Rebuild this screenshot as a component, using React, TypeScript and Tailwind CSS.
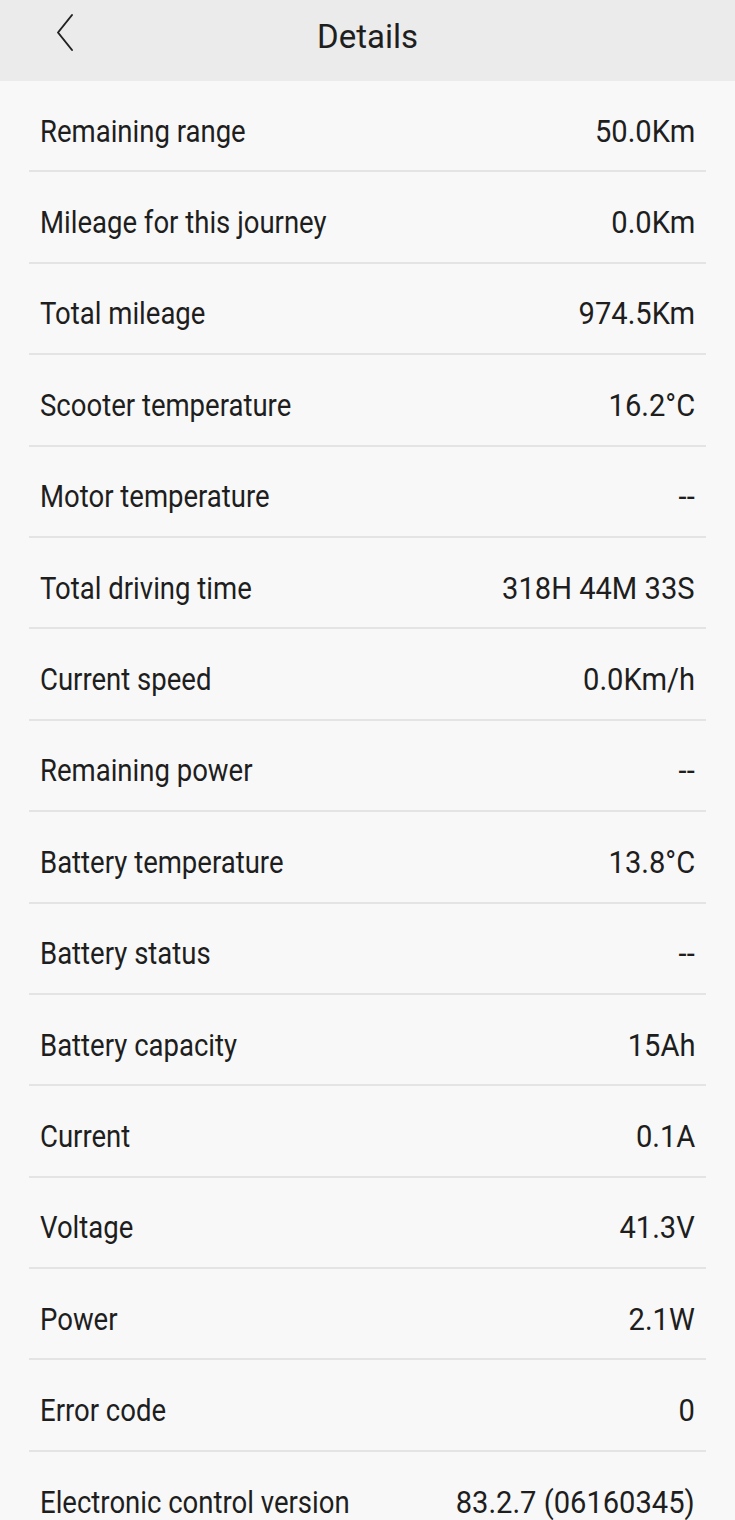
const rows: [string, string][] = [
  ['Remaining range', '50.0Km'],
  ['Mileage for this journey', '0.0Km'],
  ['Total mileage', '974.5Km'],
  ['Scooter temperature', '16.2°C'],
  ['Motor temperature', '--'],
  ['Total driving time', '318H 44M 33S'],
  ['Current speed', '0.0Km/h'],
  ['Remaining power', '--'],
  ['Battery temperature', '13.8°C'],
  ['Battery status', '--'],
  ['Battery capacity', '15Ah'],
  ['Current', '0.1A'],
  ['Voltage', '41.3V'],
  ['Power', '2.1W'],
  ['Error code', '0'],
  ['Electronic control version', '83.2.7 (06160345)'],
]

function BackIcon() {
  return (
    <svg width="20" height="40" viewBox="0 0 20 40" fill="none">
      <path d="M16 2 L2 19.5 L16 37" stroke="#222" strokeWidth="2" strokeLinecap="round" strokeLinejoin="round" />
    </svg>
  )
}

export default function App() {
  return (
    <div className="min-h-screen w-full bg-[#f8f8f8] text-[#1e1e1e] font-['Roboto',_'Liberation_Sans',_sans-serif] overflow-hidden">
      <header className="h-[81px] bg-[#ebebeb] grid grid-cols-[1fr_auto_1fr] items-center">
        <div className="self-start pl-[56px] pt-[13px]">
          <BackIcon />
        </div>
        <h1 className="text-[33px] leading-none pb-[9px]">Details</h1>
        <div />
      </header>

      <div className="px-[29px]">
        {rows.map(([label, value]) => (
          <div
            key={label}
            className="h-[91.4px] pt-[10px] px-[11px] flex items-center justify-between border-b-2 border-[#e4e4e4] text-[32px] leading-none whitespace-nowrap"
          >
            <span className="origin-left scale-x-[0.86]">{label}</span>
            <span className="origin-right scale-x-[0.91]">{value}</span>
          </div>
        ))}
      </div>
    </div>
  )
}
